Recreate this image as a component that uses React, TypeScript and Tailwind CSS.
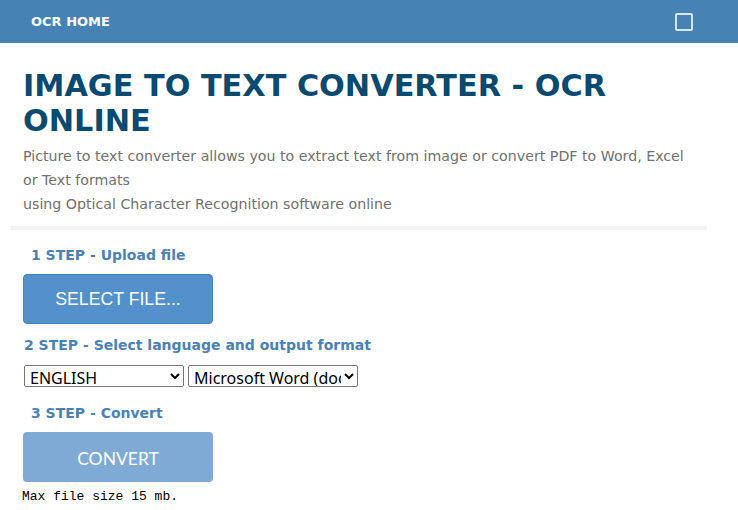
export default function App() {
  return (
    <div className="min-h-[510px] bg-white font-['DejaVu_Sans',Verdana,sans-serif]">
      {/* Top bar */}
      <header className="flex h-[43px] items-center justify-between bg-[#4682b4] pl-[31px] pr-[45px]">
        <a className="text-[13px] font-bold text-white">OCR HOME</a>
        <span className="block h-[18px] w-[18px] rounded-[2px] border-2 border-[#d4e6f7]" />
      </header>

      <main className="w-[707px] pl-[23px] pt-[25px]">
        <h1 className="text-[30.3px] font-bold leading-[35px] text-[#0b4a70]">
          IMAGE TO TEXT CONVERTER - OCR ONLINE
        </h1>
        <p className="mt-[6px] w-[672px] text-[14.2px] leading-[24px] text-[#707070]">
          Picture to text converter allows you to extract text from image or convert PDF to Word, Excel or Text formats
          <br />
          using Optical Character Recognition software online
        </p>
      </main>

      <div className="ml-[11px] mt-[10px] h-[4px] w-[696px] bg-[#f3f3f3]" />

      <section className="pl-[23px]">
        <h2 className="mt-[15px] pl-[8px] text-[14px] font-bold leading-[20px] text-[#4a82b8]">1 STEP - Upload file</h2>
        <button
          type="button"
          className="mt-[9px] flex h-[50px] w-[190px] items-center justify-center rounded-[4px] border border-[#4a82bb] bg-[#5490cb] font-['Liberation_Sans',Arial,sans-serif] text-[17.7px] text-white"
        >
          SELECT FILE...
        </button>

        <h2 className="mt-[11px] pl-[1px] text-[14px] font-bold leading-[20px] text-[#4a82b8]">
          2 STEP - Select language and output format
        </h2>
        <div className="mt-[10px] flex gap-[4px] pl-[1px]">
          <select className="h-[22px] w-[160px] rounded-[2px] border border-[#767676] bg-white py-0 pl-[1px] font-['Noto_Sans',sans-serif] text-[16px] leading-[20px] text-black">
            <option>ENGLISH</option>
          </select>
          <select className="h-[22px] w-[170px] rounded-[2px] border border-[#767676] bg-white py-0 pl-[1px] font-['Noto_Sans',sans-serif] text-[16px] leading-[20px] text-black">
            <option>Microsoft Word (docx)</option>
          </select>
        </div>

        <h2 className="mt-[16px] pl-[8px] text-[14px] font-bold leading-[20px] text-[#4a82b8]">3 STEP - Convert</h2>
        <button
          type="button"
          className="mt-[9px] flex h-[50px] w-[190px] items-center justify-center rounded-[4px] bg-[#80aad6] pt-[4px] font-['Lato',sans-serif] text-[17.5px] text-white"
        >
          CONVERT
        </button>
        <p className="mt-[7px] -ml-[1px] font-['Liberation_Mono','Courier_New',monospace] text-[13px] leading-[15px] text-black">
          Max file size 15 mb.
        </p>
      </section>
    </div>
  );
}
